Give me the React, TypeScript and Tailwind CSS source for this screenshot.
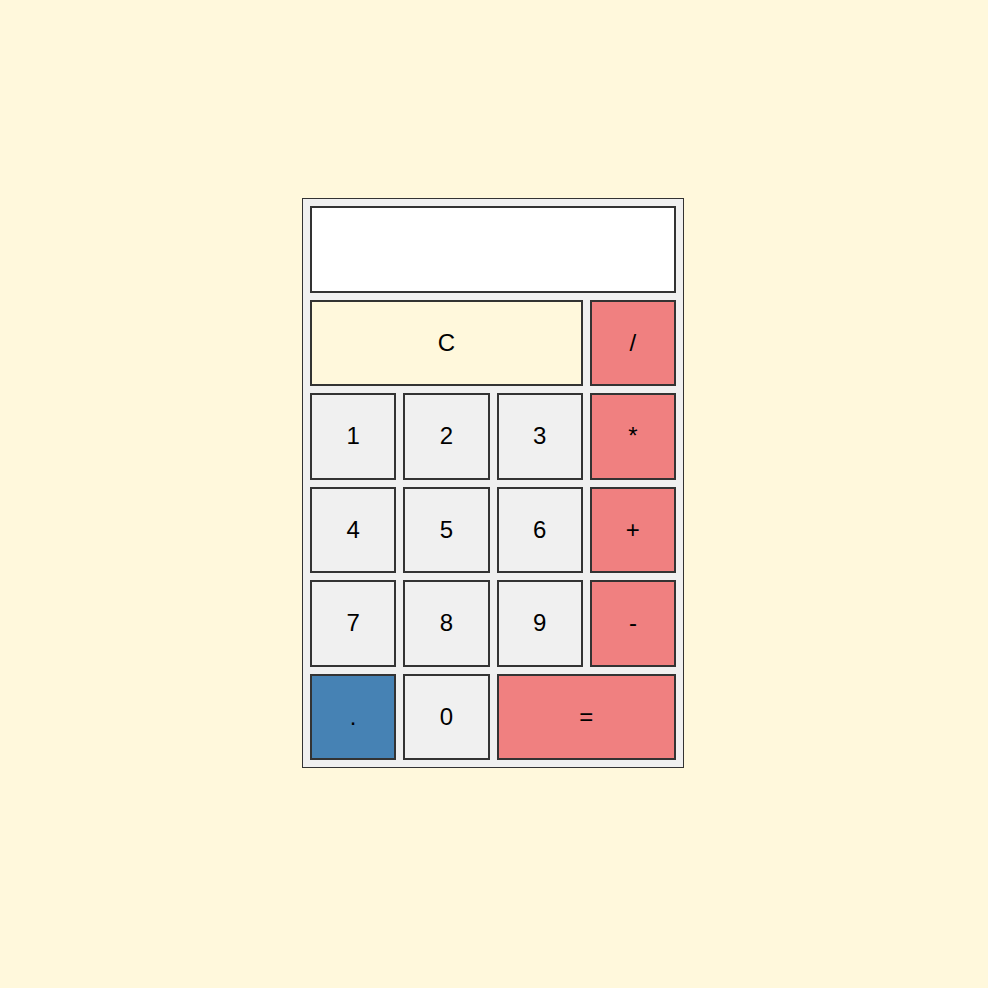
const keys: { label: string; cls: string }[] = [
  { label: '1', cls: 'bg-[#f0f0f0]' },
  { label: '2', cls: 'bg-[#f0f0f0]' },
  { label: '3', cls: 'bg-[#f0f0f0]' },
  { label: '*', cls: 'bg-[#f08080]' },
  { label: '4', cls: 'bg-[#f0f0f0]' },
  { label: '5', cls: 'bg-[#f0f0f0]' },
  { label: '6', cls: 'bg-[#f0f0f0]' },
  { label: '+', cls: 'bg-[#f08080]' },
  { label: '7', cls: 'bg-[#f0f0f0]' },
  { label: '8', cls: 'bg-[#f0f0f0]' },
  { label: '9', cls: 'bg-[#f0f0f0]' },
  { label: '-', cls: 'bg-[#f08080]' },
  { label: '.', cls: 'bg-[#4682b4]' },
  { label: '0', cls: 'bg-[#f0f0f0]' },
  { label: '=', cls: 'bg-[#f08080] col-span-2' },
]

export default function App() {
  return (
    <div className="flex h-[988px] w-full items-center justify-center bg-[#fff8dc] pr-[2px] pb-[22px] font-['Liberation_Sans',Arial,sans-serif]">
      <div className="border border-[#333] bg-[#f0f0f0] p-[7px]">
        <div className="grid w-[366px] grid-cols-4 auto-rows-[86.5px] gap-[7px]">
          <div className="col-span-4 border-2 border-[#333] bg-white" />
          <button className="col-span-3 border-2 border-[#333] bg-[#fff8dc] text-[24px] text-black">C</button>
          <button className="border-2 border-[#333] bg-[#f08080] text-[24px] text-black">/</button>
          {keys.map(k => (
            <button key={k.label} className={`border-2 border-[#333] text-[24px] text-black ${k.cls}`}>
              {k.label}
            </button>
          ))}
        </div>
      </div>
    </div>
  )
}
